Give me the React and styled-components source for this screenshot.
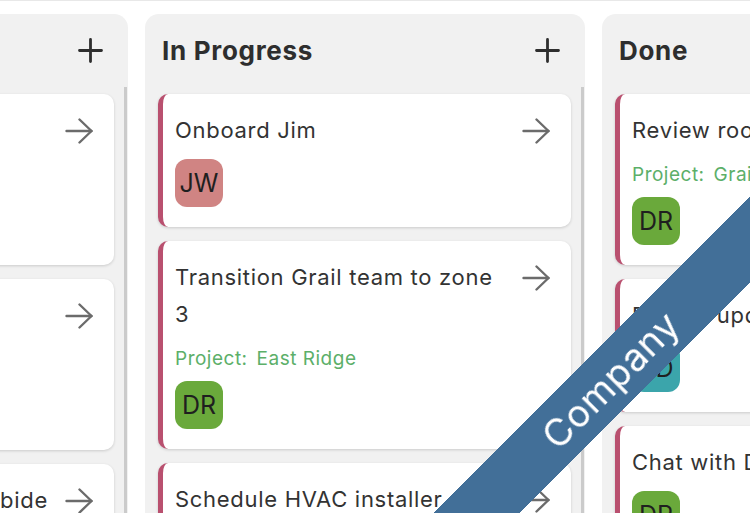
import React from 'react';
import styled, { createGlobalStyle } from 'styled-components';

const Global = createGlobalStyle`
  html, body {
    margin: 0;
    background: #ffffff;
    overflow: hidden;
  }
  body {
    border-top: 1px solid #e8e8e8;
    font-family: Inter, "Noto Sans", "Liberation Sans", sans-serif;
    color: #333333;
  }
`;

const Board = styled.div`
  display: flex;
  gap: 17px;
  margin-left: -312px;
  padding-top: 13px;
  height: 499px;
`;

const Column = styled.section`
  flex: 0 0 440px;
  background: #f1f1f1;
  border-radius: 14px 14px 0 0;
  display: flex;
  flex-direction: column;
  padding-right: 1px;
  box-sizing: border-box;
`;

const Header = styled.div`
  height: 73px;
  flex: 0 0 73px;
  display: flex;
  align-items: center;
  justify-content: space-between;
  padding: 0 24px 0 17px;
`;

const Title = styled.h2`
  margin: 0;
  font-size: 26px;
  letter-spacing: 0.7px;
  font-weight: 700;
  color: #2e2e2e;
`;

const List = styled.div`
  flex: 1;
  display: flex;
  flex-direction: column;
  gap: 14px;
  padding: 7px 10px 0 13px;
  border-right: 3px solid #cbcbcb;
  overflow: hidden;
`;

const Card = styled.div`
  background: #ffffff;
  border-radius: 10px;
  border-left: 5px solid ${(p) => (p.$accent ? '#b9506f' : '#ffffff')};
  box-shadow: 0 1px 3px rgba(0, 0, 0, 0.16);
  padding: 18px 21px 20px 12px;
  display: flex;
  flex-direction: column;
  gap: 10px;
  flex-shrink: 0;
`;

const TopRow = styled.div`
  display: flex;
  align-items: flex-start;
  justify-content: space-between;
  gap: 16px;
`;

const CardTitle = styled.div`
  font-size: 22px;
  letter-spacing: 0.7px;
  line-height: 37px;
  color: #333333;
  max-width: 338px;
`;

const ArrowButton = styled.span`
  display: flex;
  align-items: center;
  height: 37px;
  color: #6b6b6b;
`;

const Project = styled.div`
  font-size: 19px;
  letter-spacing: 0.5px;
  line-height: 25px;
  padding-top: 3px;
  color: #5caf69;
  display: flex;
  gap: 9px;
`;

const Avatar = styled.div`
  width: 48px;
  height: 48px;
  border-radius: 12px;
  background: ${(p) => p.$color};
  display: flex;
  align-items: center;
  justify-content: center;
  font-size: 25px;
  color: #1f1f1f;
`;

const Ribbon = styled.div`
  position: fixed;
  left: 310px;
  top: 349px;
  width: 600px;
  height: 61px;
  background: #426f98;
  transform: rotate(-45deg);
  display: flex;
  align-items: center;
  justify-content: center;
  color: #ffffff;
  font-size: 38px;
  letter-spacing: 0.5px;
  font-family: Inter, "Noto Sans", sans-serif;
  pointer-events: none;
`;

const Arrow = () => (
  <svg width="28" height="26" viewBox="0 0 28 26" fill="none" stroke="currentColor" strokeWidth="2.4" strokeLinecap="round" strokeLinejoin="round">
    <path d="M1.5 13h25" />
    <path d="M14.5 1.5 26.5 13 14.5 24.5" />
  </svg>
);

const Plus = () => (
  <svg width="25" height="25" viewBox="0 0 25 25" stroke="#2e2e2e" strokeWidth="2.8" strokeLinecap="round">
    <path d="M12.5 1.5v22M1.5 12.5h22" />
  </svg>
);

const colors = {
  JW: '#d08483',
  DR: '#6aa93b',
  KD: '#3ba5ab',
};

const columns = [
  {
    name: 'To Do',
    add: true,
    cards: [
      { title: 'Order lumber', project: 'Grail', who: 'DR' },
      { title: 'Call inspector', project: 'East Ridge', who: 'JW' },
      { title: 'Ensure all site crews do abide', who: 'DR' },
    ],
  },
  {
    name: 'In Progress',
    add: true,
    cards: [
      { title: 'Onboard Jim', who: 'JW', accent: true },
      { title: 'Transition Grail team to zone 3', project: 'East Ridge', who: 'DR', accent: true },
      { title: 'Schedule HVAC installer', who: 'DR', accent: true },
    ],
  },
  {
    name: 'Done',
    cards: [
      { title: 'Review roofing bids', project: 'Grail', who: 'DR', accent: true },
      { title: 'Project update', who: 'KD', accent: true },
      { title: 'Chat with Dave', who: 'DR', accent: true },
    ],
  },
];

export default function App() {
  return (
    <>
      <Global />
      <Board>
        {columns.map((col) => (
          <Column key={col.name}>
            <Header>
              <Title>{col.name}</Title>
              {col.add && <Plus />}
            </Header>
            <List>
              {col.cards.map((c) => (
                <Card key={c.title} $accent={c.accent}>
                  <TopRow>
                    <CardTitle>{c.title}</CardTitle>
                    <ArrowButton>
                      <Arrow />
                    </ArrowButton>
                  </TopRow>
                  {c.project && (
                    <Project>
                      <span>Project:</span>
                      <span>{c.project}</span>
                    </Project>
                  )}
                  <Avatar $color={colors[c.who]}>{c.who}</Avatar>
                </Card>
              ))}
            </List>
          </Column>
        ))}
      </Board>
      <Ribbon>Company</Ribbon>
    </>
  );
}
